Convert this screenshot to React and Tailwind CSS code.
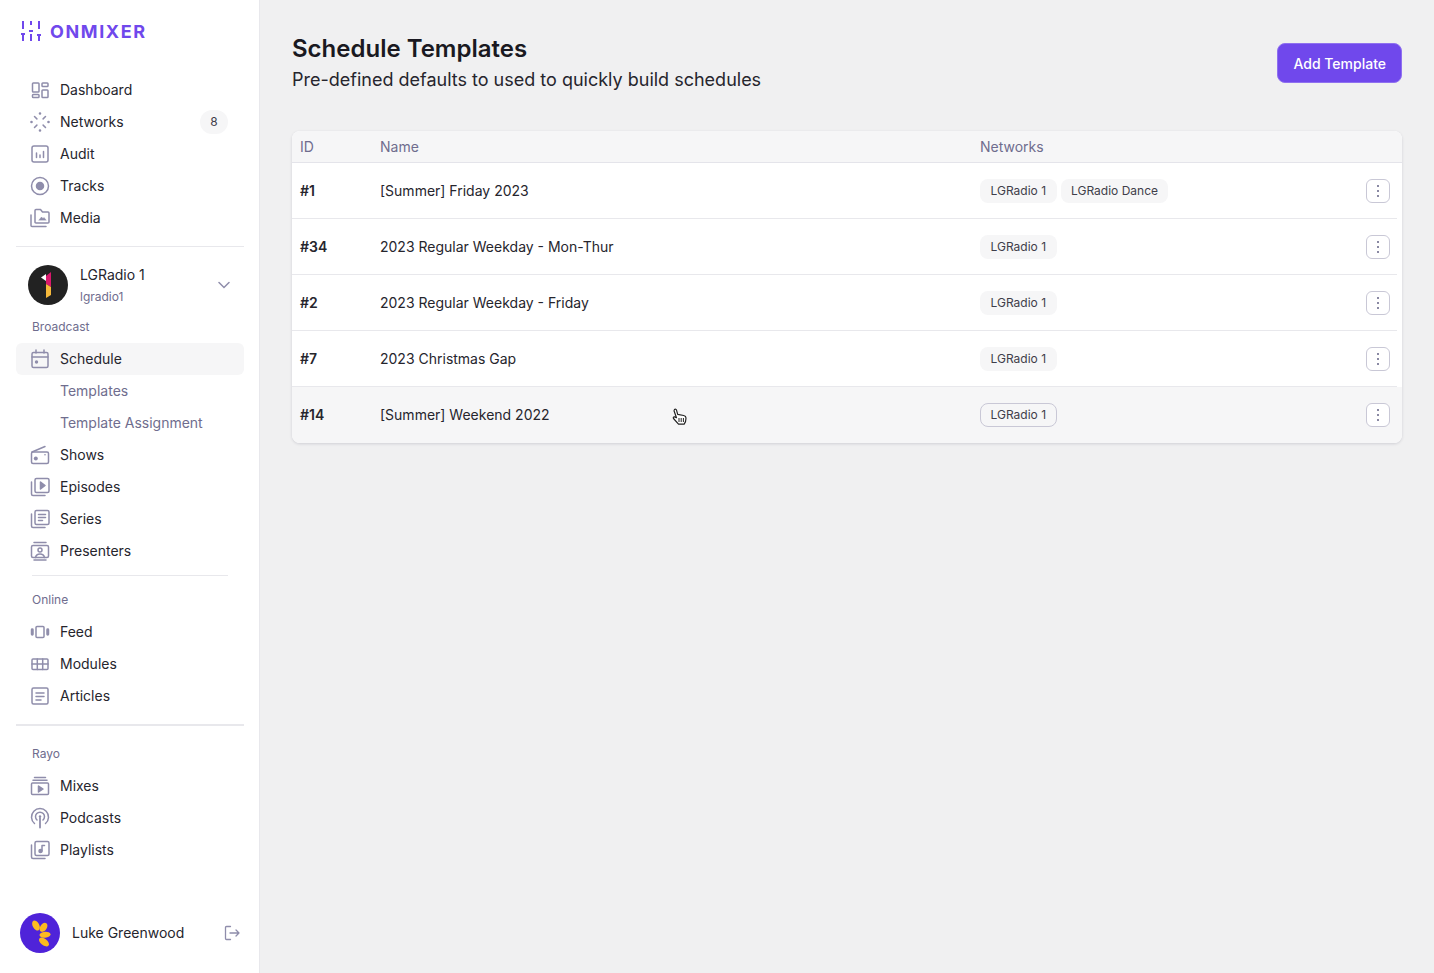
import React from "react";

const Svg = ({ children }) => (
  <svg viewBox="0 0 24 24" fill="none" stroke="#8f8dab" strokeWidth="1.5" strokeLinecap="round" strokeLinejoin="round" className="w-6 h-6 shrink-0">
    {children}
  </svg>
);

const icons = {
  dashboard: (
    <>
      <rect x="4.500" y="5" width="6.500" height="9" rx="0.800" />
      <rect x="14" y="5" width="6" height="3.500" rx="0.800" />
      <rect x="4.500" y="16.500" width="6.500" height="3" rx="0.800" />
      <rect x="14" y="12" width="6" height="7.500" rx="0.800" />
    </>
  ),
  networks: (
    <>
      <path d="M12 3.500v.01M12 20.500v.01M3.500 12h.01M20.500 12h.01" strokeWidth="2.600" />
      <path d="M6.500 6.500l2.400 2.400M15.100 15.100l2.400 2.400M17.500 6.500l-2.400 2.400M8.900 15.100l-2.400 2.400" />
    </>
  ),
  audit: (
    <>
      <rect x="4" y="4" width="16" height="16" rx="2" />
      <path d="M8.500 11v4.500M12 13v2.500M15.500 9.500v6" />
    </>
  ),
  tracks: (
    <>
      <circle cx="12" cy="12" r="8.500" />
      <circle cx="12" cy="12" r="3.500" fill="#8f8dab" />
    </>
  ),
  media: (
    <>
      <path d="M7 16V4.500c0-.6.400-1 1-1h4.500l2 2.500H20c.6 0 1 .4 1 1V16c0 .6-.4 1-1 1H8c-.6 0-1-.4-1-1z" />
      <path d="M3 9v10.500c0 .6.400 1 1 1h14" />
      <path d="M11 14l2.500-3 1.500 1.500 1-1 2 2.500z" fill="#8f8dab" strokeWidth="0.500" />
    </>
  ),
  schedule: (
    <>
      <rect x="4" y="5.500" width="16" height="15" rx="1.500" />
      <path d="M4 10h16M8 3v3M16 3v3" />
      <circle cx="8.500" cy="15" r="1.700" fill="#8f8dab" stroke="none" />
    </>
  ),
  shows: (
    <>
      <rect x="3.500" y="9" width="17" height="11.500" rx="1.500" />
      <path d="M4 9l13-5.500" />
      <circle cx="7.800" cy="15.500" r="2" fill="#8f8dab" stroke="none" />
      <circle cx="17" cy="11.800" r="0.800" fill="#8f8dab" stroke="none" />
    </>
  ),
  episodes: (
    <>
      <rect x="7" y="3.500" width="14" height="14" rx="1.500" />
      <path d="M3.500 7v12c0 .8.700 1.500 1.500 1.500h12" />
      <path d="M12.500 7l4.500 3.500-4.500 3.500z" fill="#8f8dab" />
    </>
  ),
  series: (
    <>
      <rect x="7" y="3.500" width="14" height="14" rx="1.500" />
      <path d="M3.500 7v12c0 .8.700 1.500 1.500 1.500h12M10.500 7.500h7M10.500 10.500h7M10.500 13.500h4" />
    </>
  ),
  presenters: (
    <>
      <rect x="3.500" y="6.500" width="17" height="12" rx="1.500" />
      <path d="M6 3.500h12M6 21h12" />
      <circle cx="12" cy="11" r="2" />
      <path d="M7.500 18.500c.5-2.500 2.500-3.500 4.500-3.500s4 1 4.500 3.500" />
    </>
  ),
  feed: (
    <>
      <rect x="8" y="6.500" width="8" height="11" rx="1" />
      <rect x="3.500" y="9" width="1.500" height="6" rx="0.700" fill="#8f8dab" />
      <rect x="19" y="9" width="1.500" height="6" rx="0.700" fill="#8f8dab" />
    </>
  ),
  modules: (
    <>
      <rect x="4" y="7" width="16" height="10.500" rx="1" />
      <path d="M4 12h16M9.300 7v10.500M14.700 7v10.500" />
    </>
  ),
  articles: (
    <>
      <rect x="4" y="4" width="16" height="16" rx="1.500" />
      <path d="M8 9h8M8 12.500h8M8 16h5" />
    </>
  ),
  mixes: (
    <>
      <rect x="3.500" y="9" width="17" height="11.500" rx="1" />
      <path d="M6.500 3.500h11M5 6.200h14" />
      <path d="M10.500 12l4.500 3-4.500 3z" fill="#8f8dab" />
    </>
  ),
  podcasts: (
    <>
      <path d="M6.500 17.500a8.500 8.500 0 1 1 11 0" />
      <path d="M9 14a4.500 4.500 0 1 1 6 0" />
      <path d="M12 12v9.500" strokeWidth="1.800" />
      <circle cx="12" cy="10.500" r="1.200" fill="#8f8dab" stroke="none" />
    </>
  ),
  playlists: (
    <>
      <rect x="7" y="3.500" width="14" height="14" rx="1.500" />
      <path d="M3.500 7v12c0 .8.700 1.500 1.500 1.500h12M14 13V7.500h2.500" />
      <circle cx="12.500" cy="13" r="1.500" fill="#8f8dab" />
    </>
  ),
};

const NavItem = ({ icon, label, badge, active }) => (
  <div className={`flex items-center gap-2 h-8 px-3 rounded-md ${active ? "bg-[#f6f6f7]" : ""}`}>
    <Svg>{icons[icon]}</Svg>
    <span className="flex-1 text-sm text-[#26252d]">{label}</span>
    {badge && (
      <span className="flex items-center justify-center w-7 h-6 mr-1 rounded-full bg-[#f6f6f7] text-xs text-[#3f3e4a]">
        {badge}
      </span>
    )}
  </div>
);

const SubItem = ({ label }) => (
  <div className="flex items-center h-8 pl-11 text-sm text-[#6f6d8e]">{label}</div>
);

const GroupLabel = ({ children, className }) => (
  <div className={`px-4 text-xs text-[#6f6d8e] ${className}`}>{children}</div>
);

const Pill = ({ label, hover }) => (
  <span className={`flex items-center h-6 px-[9.5px] rounded-lg text-xs text-[#3f3e4a] bg-[#f6f6f7] border ${hover ? "border-[#c9c8d6]" : "border-transparent"}`}>
    {label}
  </span>
);

const rows = [
  { id: "#1", name: "[Summer] Friday 2023", networks: ["LGRadio 1", "LGRadio Dance"] },
  { id: "#34", name: "2023 Regular Weekday - Mon-Thur", networks: ["LGRadio 1"] },
  { id: "#2", name: "2023 Regular Weekday - Friday", networks: ["LGRadio 1"] },
  { id: "#7", name: "2023 Christmas Gap", networks: ["LGRadio 1"] },
  { id: "#14", name: "[Summer] Weekend 2022", networks: ["LGRadio 1"], hover: true },
];

export default function App() {
  return (
    <div className="flex min-h-[973px] bg-[#f0f0f1] font-['Inter',sans-serif]">
      <aside className="flex flex-col w-[260px] h-[973px] shrink-0 bg-white border-r border-[#e8e8ec] pl-4 pr-[15px]">
        <div className="flex items-center gap-[9px] h-[62px] pl-[5px]">
          <svg viewBox="0 0 20 20" fill="none" stroke="#7048ec" strokeWidth="2" className="w-5 h-5 shrink-0">
            <path d="M2 0v8M2 14v6M0 13h4M10 0v4M10 13v7M8 10h4M18 0v8M18 15v5M16 14h4" />
          </svg>
          <span className="mt-0.5 text-lg font-bold tracking-[1.6px] text-[#7048ec]">ONMIXER</span>
        </div>
        <nav className="mt-3">
          <NavItem icon="dashboard" label="Dashboard" />
          <NavItem icon="networks" label="Networks" badge="8" />
          <NavItem icon="audit" label="Audit" />
          <NavItem icon="tracks" label="Tracks" />
          <NavItem icon="media" label="Media" />
        </nav>
        <div className="h-px mt-3 bg-[#e8e8ec]" />
        <div className="flex items-center gap-3 h-10 mt-[18px] px-3">
          <svg viewBox="0 0 40 40" className="w-10 h-10 shrink-0">
            <circle cx="20" cy="20" r="20" fill="#222222" />
            <path d="M18 11L23 7V22L18 19Z" fill="#d9186c" />
            <path d="M13 12.500L18 9V16Z" fill="#ffffff" />
            <path d="M18 19L23 22V30L18 33Z" fill="#f6b93b" />
          </svg>
          <div className="flex-1 min-w-0 self-start">
            <div className="text-sm leading-5 text-[#26252d]">LGRadio 1</div>
            <div className="text-xs leading-6 text-[#6f6d8e]">lgradio1</div>
          </div>
          <svg viewBox="0 0 12 12" fill="none" stroke="#8f8dab" strokeWidth="1.500" strokeLinecap="round" className="w-3 h-3 mr-[2px]">
            <path d="M1 3.500l5 5 5-5" />
          </svg>
        </div>
        <GroupLabel className="mt-[14px] mb-2 leading-4">Broadcast</GroupLabel>
        <NavItem icon="schedule" label="Schedule" active />
        <SubItem label="Templates" />
        <SubItem label="Template Assignment" />
        <NavItem icon="shows" label="Shows" />
        <NavItem icon="episodes" label="Episodes" />
        <NavItem icon="series" label="Series" />
        <NavItem icon="presenters" label="Presenters" />
        <div className="h-px mx-4 mt-2 bg-[#e8e8ec]" />
        <GroupLabel className="mt-4 mb-2 leading-4">Online</GroupLabel>
        <NavItem icon="feed" label="Feed" />
        <NavItem icon="modules" label="Modules" />
        <NavItem icon="articles" label="Articles" />
        <div className="h-0.5 mt-3 bg-[#e8e8ec]" />
        <GroupLabel className="mt-5 mb-2 leading-4">Rayo</GroupLabel>
        <NavItem icon="mixes" label="Mixes" />
        <NavItem icon="podcasts" label="Podcasts" />
        <NavItem icon="playlists" label="Playlists" />
        <div className="flex items-center gap-3 mt-auto mb-5 pl-1">
          <svg viewBox="0 0 40 40" className="w-10 h-10 shrink-0">
            <circle cx="20" cy="20" r="20" fill="#4f23d9" />
            <g fill="#fdbb1f">
              <ellipse cx="16" cy="12.500" rx="3.300" ry="5.500" transform="rotate(-28 16 12.500)" />
              <ellipse cx="23.500" cy="14.300" rx="3.300" ry="5" transform="rotate(35 23.500 14.300)" />
              <ellipse cx="25" cy="21.800" rx="5.500" ry="3" transform="rotate(-5 25 21.800)" />
              <ellipse cx="24" cy="29" rx="5.800" ry="3.300" transform="rotate(38 24 29)" />
            </g>
          </svg>
          <span className="flex-1 text-sm text-[#26252d]">Luke Greenwood</span>
          <svg viewBox="0 0 16 16" fill="none" stroke="#8f8dab" strokeWidth="1.300" strokeLinecap="round" strokeLinejoin="round" className="w-4 h-4 mr-1">
            <path d="M6.500 1.500H2.500a1 1 0 0 0-1 1v11a1 1 0 0 0 1 1h4M6 8h9M12 5l3 3-3 3" />
          </svg>
        </div>
      </aside>

      <main className="relative flex-1 min-w-0 px-8 pt-[33px]">
        <div className="flex items-start justify-between">
          <div>
            <h1 className="text-2xl leading-8 font-semibold text-[#1a1921]">Schedule Templates</h1>
            <p className="text-lg leading-[30px] text-[#26252d]">Pre-defined defaults to used to quickly build schedules</p>
          </div>
          <button className="flex items-center h-10 mt-[10px] px-[15px] pt-[2px] rounded-lg bg-[#7048ec] border border-[#8f70f0] text-sm font-medium text-white">
            Add Template
          </button>
        </div>
        <div className="mt-9 rounded-lg bg-white shadow-[0_1px_3px_rgba(30,30,60,0.15)] overflow-hidden">
          <div className="flex items-center h-8 bg-[#f6f6f7] border-b border-[#e4e4ea] text-sm text-[#6f6d8e]">
            <div className="w-[88px] shrink-0 pl-2">ID</div>
            <div className="w-[600px] shrink-0">Name</div>
            <div>Networks</div>
          </div>
          {rows.map((row, i) => (
            <div key={row.id} className={`relative flex items-center h-14 text-sm text-[#26252d] ${row.hover ? "bg-[#f6f6f7]" : ""}`}>
              <div className="w-[88px] shrink-0 pl-2 font-semibold">{row.id}</div>
              <div className="w-[600px] shrink-0">{row.name}</div>
              <div className="flex flex-1 items-center gap-1">
                {row.networks.map((n) => (
                  <Pill key={n} label={n} hover={row.hover} />
                ))}
              </div>
              <button className="flex items-center justify-center w-6 h-6 mr-3 rounded-md bg-white border border-[#c9c8d6]">
                <svg viewBox="0 0 4 14" className="w-1 h-3.5" fill="#6f6d8e">
                  <circle cx="2" cy="2" r="1.100" />
                  <circle cx="2" cy="7" r="1.100" />
                  <circle cx="2" cy="12" r="1.100" />
                </svg>
              </button>
              {i < rows.length - 1 && <div className="absolute left-0 right-[5px] bottom-0 h-px bg-[#e8e8ec]" />}
            </div>
          ))}
        </div>
        {/* mouse cursor over last row */}
        <svg viewBox="0 0 16 18" className="absolute left-[412px] top-[408px] w-4 h-[18px]" fill="#ffffff" stroke="#222222" strokeWidth="1.200" strokeLinejoin="round">
          <path d="M2.500 1.500c.8-.6 1.800-.2 2 .6l1.200 4.200 6 1.200c1.300.3 2.300 1.300 2.300 2.600 0 2.500-.5 4.500-1.800 6H6.500L1.500 10.500c-.6-.8 0-1.800 1-1.600l2 .8-2.400-6.700c-.1-.6.100-1.100.4-1.500z" />
          <path d="M7 10v4M9.200 10v4M11.400 10v4" strokeWidth="1" />
        </svg>
      </main>
    </div>
  );
}
